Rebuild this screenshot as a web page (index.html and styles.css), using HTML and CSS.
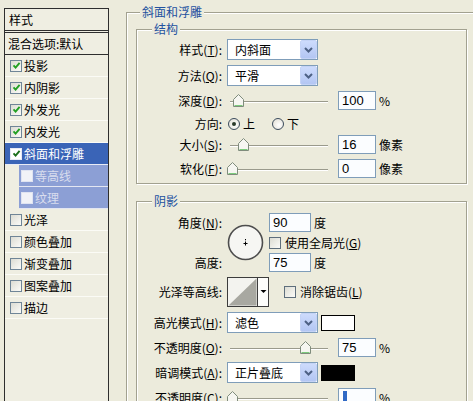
FILE: index.html
```html
<!DOCTYPE html>
<html lang="zh-CN">
<head>
<meta charset="utf-8">
<title>图层样式</title>
<link rel="stylesheet" href="styles.css">
</head>
<body>
<div class="dialog">
  <aside class="panel">
    <div class="panel-head">样式</div>
    <ul class="style-list">
      <li class="item blend">混合选项:默认</li>
      <li class="item"><span class="cb on"><svg class="tick" width="9" height="9" viewBox="0 0 9 9"><path d="M1.5 4.3 L3.6 6.6 L7.6 1.8"/></svg></span>投影</li>
      <li class="item"><span class="cb on"><svg class="tick" width="9" height="9" viewBox="0 0 9 9"><path d="M1.5 4.3 L3.6 6.6 L7.6 1.8"/></svg></span>内阴影</li>
      <li class="item"><span class="cb on"><svg class="tick" width="9" height="9" viewBox="0 0 9 9"><path d="M1.5 4.3 L3.6 6.6 L7.6 1.8"/></svg></span>外发光</li>
      <li class="item"><span class="cb on"><svg class="tick" width="9" height="9" viewBox="0 0 9 9"><path d="M1.5 4.3 L3.6 6.6 L7.6 1.8"/></svg></span>内发光</li>
      <li class="item selected"><span class="cb on"><svg class="tick" width="9" height="9" viewBox="0 0 9 9"><path d="M1.5 4.3 L3.6 6.6 L7.6 1.8"/></svg></span>斜面和浮雕</li>
      <li class="item sub"><span class="cb"></span>等高线</li>
      <li class="item sub"><span class="cb"></span>纹理</li>
      <li class="item"><span class="cb"></span>光泽</li>
      <li class="item"><span class="cb"></span>颜色叠加</li>
      <li class="item"><span class="cb"></span>渐变叠加</li>
      <li class="item"><span class="cb"></span>图案叠加</li>
      <li class="item"><span class="cb"></span>描边</li>
    </ul>
  </aside>

  <main class="content">
    <fieldset class="group outer">
      <legend class="group-title">斜面和浮雕</legend>

      <fieldset class="group inner structure">
        <legend class="group-title">结构</legend>
        <div class="rows">
          <div class="row r-select">
            <span class="lbl">样式(<u>T</u>):</span>
            <div class="select"><span class="select-text">内斜面</span><span class="select-btn"><svg width="9" height="6" viewBox="0 0 9 6"><path d="M1 1 L4.5 4.5 L8 1"/></svg></span></div>
          </div>
          <div class="row r-select">
            <span class="lbl">方法(<u>Q</u>):</span>
            <div class="select"><span class="select-text">平滑</span><span class="select-btn"><svg width="9" height="6" viewBox="0 0 9 6"><path d="M1 1 L4.5 4.5 L8 1"/></svg></span></div>
          </div>
          <div class="row r-field">
            <span class="lbl">深度(<u>D</u>):</span>
            <div class="slider"><span class="track"></span><span class="thumb" style="left:6px"><svg width="11" height="13" viewBox="0 0 11 13"><path class="thumb-body" d="M0.5 5.5 L5.5 0.5 L10.5 5.5 V12.5 H0.5 Z"/><path class="thumb-foot" d="M1.5 11.5 H9.5"/></svg></span></div>
            <span class="num">100</span><span class="unit">%</span>
          </div>
          <div class="row r-radio">
            <span class="lbl">方向:</span>
            <span class="radio on"></span><span class="opt">上</span>
            <span class="radio second"></span><span class="opt">下</span>
          </div>
          <div class="row r-field">
            <span class="lbl">大小(<u>S</u>):</span>
            <div class="slider"><span class="track"></span><span class="thumb" style="left:11px"><svg width="11" height="13" viewBox="0 0 11 13"><path class="thumb-body" d="M0.5 5.5 L5.5 0.5 L10.5 5.5 V12.5 H0.5 Z"/><path class="thumb-foot" d="M1.5 11.5 H9.5"/></svg></span></div>
            <span class="num">16</span><span class="unit">像素</span>
          </div>
          <div class="row r-field">
            <span class="lbl">软化(<u>F</u>):</span>
            <div class="slider"><span class="track"></span><span class="thumb" style="left:0px"><svg width="11" height="13" viewBox="0 0 11 13"><path class="thumb-body" d="M0.5 5.5 L5.5 0.5 L10.5 5.5 V12.5 H0.5 Z"/><path class="thumb-foot" d="M1.5 11.5 H9.5"/></svg></span></div>
            <span class="num">0</span><span class="unit">像素</span>
          </div>
        </div>
      </fieldset>

      <fieldset class="group inner shading">
        <legend class="group-title">阴影</legend>
        <div class="rows">
          <div class="angle">
            <span class="lbl a-l1">角度(<u>N</u>):</span>
            <svg class="dial" width="37" height="37" viewBox="0 0 37 37">
              <circle cx="18.5" cy="18.5" r="17" fill="#f6f6f3" stroke="#4d4d4d" stroke-width="1.6"/>
              <path d="M16.5 19.5 H20.5 M18.5 17.5 V21.5 M18.5 15 V16.3" stroke="#000" stroke-width="1" fill="none"/>
            </svg>
            <div class="a-f1"><span class="num wide">90</span><span class="unit">度</span></div>
            <div class="a-f2"><span class="chk"></span><span class="chk-text">使用全局光(<u>G</u>)</span></div>
            <span class="lbl a-l3">高度:</span>
            <div class="a-f3"><span class="num wide">75</span><span class="unit">度</span></div>
          </div>

          <div class="row r-contour">
            <span class="lbl">光泽等高线:</span>
            <svg class="contour" width="42" height="30" viewBox="0 0 42 30">
              <rect x="0.5" y="0.5" width="30" height="29" fill="#f3f3ef" stroke="#3c3c3c"/>
              <polygon points="1.5,28.5 29.5,1.5 29.5,28.5" fill="#a8a8a1"/>
              <rect x="30.5" y="0.5" width="11" height="29" fill="#fdfdfb" stroke="#3c3c3c"/>
              <polygon points="33.5,13 39.5,13 36.5,16" fill="#000"/>
            </svg>
            <span class="chk aa"></span><span class="chk-text">消除锯齿(<u>L</u>)</span>
          </div>

          <div class="row r-select">
            <span class="lbl">高光模式(<u>H</u>):</span>
            <div class="select"><span class="select-text">滤色</span><span class="select-btn"><svg width="9" height="6" viewBox="0 0 9 6"><path d="M1 1 L4.5 4.5 L8 1"/></svg></span></div>
            <span class="swatch white"></span>
          </div>
          <div class="row r-field">
            <span class="lbl">不透明度(<u>O</u>):</span>
            <div class="slider"><span class="track"></span><span class="thumb" style="left:73px"><svg width="11" height="13" viewBox="0 0 11 13"><path class="thumb-body" d="M0.5 5.5 L5.5 0.5 L10.5 5.5 V12.5 H0.5 Z"/><path class="thumb-foot" d="M1.5 11.5 H9.5"/></svg></span></div>
            <span class="num">75</span><span class="unit">%</span>
          </div>
          <div class="row r-select">
            <span class="lbl">暗调模式(<u>A</u>):</span>
            <div class="select"><span class="select-text">正片叠底</span><span class="select-btn"><svg width="9" height="6" viewBox="0 0 9 6"><path d="M1 1 L4.5 4.5 L8 1"/></svg></span></div>
            <span class="swatch black"></span>
          </div>
          <div class="row r-field">
            <span class="lbl">不透明度(<u>C</u>):</span>
            <div class="slider"><span class="track"></span><span class="thumb" style="left:0px"><svg width="11" height="13" viewBox="0 0 11 13"><path class="thumb-body" d="M0.5 5.5 L5.5 0.5 L10.5 5.5 V12.5 H0.5 Z"/><path class="thumb-foot" d="M1.5 11.5 H9.5"/></svg></span></div>
            <span class="num"><span class="caret"></span></span><span class="unit">%</span>
          </div>
        </div>
      </fieldset>
    </fieldset>
  </main>
</div>
</body>
</html>
```

FILE: styles.css
```css
* { box-sizing: border-box; }
html, body { margin: 0; padding: 0; }
body {
  width: 473px;
  height: 401px;
  overflow: hidden;
  background: #ecebdc;
  color: #000;
  font: 12px/14px "Noto Sans CJK SC", "Liberation Sans", sans-serif;
}
u { text-decoration: underline; text-underline-offset: 1px; }

.dialog { display: flex; align-items: flex-start; }

/* ---------- left style list ---------- */
.panel {
  flex: none;
  width: 105px;
  height: 430px;
  margin: 8px 0 0 4px;
  border: 1px solid #2e2e2e;
  background: #efeee2;
}
.panel-head {
  height: 24px;
  padding: 3px 0 0 4px;
  border-bottom: 3px double #2e2e2e;
  line-height: 16px;
}
.style-list { list-style: none; margin: 0; padding: 0; }
.item {
  display: flex;
  align-items: center;
  height: 22px;
  padding-left: 5px;
  border-bottom: 1px solid #fbfbf6;
  white-space: nowrap;
}
.item.blend { padding-left: 3px; border-bottom-color: #2e2e2e; }
.item.selected { background: #3a64b7; color: #fff; border-bottom-color: #e8ebf6; }
.item.sub {
  margin-left: 14px;
  padding-left: 2px;
  background: #8c9fd5;
  color: #d9ddee;
  border-bottom-color: #e3e6f2;
}
.cb {
  flex: none;
  width: 12px;
  height: 12px;
  margin-right: 2px;
  border: 1px solid #6f8597;
  background: linear-gradient(135deg, #dcdcd3, #fbfbf8);
  display: flex;
  align-items: center;
  justify-content: center;
}
.selected .cb { background: #fff; border-color: #e6e9f4; }
.sub .cb { background: #f1f2f7; border-color: #dfe3f1; }
.tick path { fill: none; stroke: #22a022; stroke-width: 1.9; }
.selected .tick path { stroke: #1a6e1a; }

/* ---------- right groups ---------- */
.content { flex: none; margin-left: 17px; }
.group {
  margin: 0;
  padding: 0;
  min-width: 0;
  border: 1px solid #a2a190;
  box-shadow: inset 1px 1px 0 #fff, 1px 1px 0 #fff;
}
.group-title {
  padding: 0 2px;
  line-height: 14px;
  color: #23519f;
  background: #ecebdc;
}
.outer { width: 380px; height: 430px; margin-top: 5px; }
.outer > .group-title { margin-left: 13px; }
.inner { width: 331px; margin-left: 9px; }
.inner > .group-title { margin-left: 15px; }
.structure { margin-top: 3px; padding: 3px 0 5px; }
.shading { margin-top: 10px; padding: 5px 0 0; height: 260px; }

.rows { display: flex; flex-direction: column; gap: 5px; }
.row { display: flex; align-items: center; white-space: nowrap; }
.r-select { height: 21px; }
.r-field { height: 19px; }
.r-radio { height: 13px; margin-top: 2px; }
.r-contour { height: 30px; }

.lbl {
  flex: none;
  width: 85px;
  margin-right: 5px;
  text-align: right;
  white-space: nowrap;
}

.select {
  flex: none;
  display: flex;
  align-items: center;
  width: 91px;
  height: 21px;
  border: 1px solid #7f9db9;
  background: #fff;
}
.select-text { flex: 1; padding-left: 7px; }
.select-btn {
  flex: none;
  display: flex;
  align-items: center;
  justify-content: center;
  width: 17px;
  height: 19px;
  border: 1px solid #c4d3f6;
  border-radius: 2px;
  background: linear-gradient(#cddbfc, #b3c6f3);
}
.select-btn path { fill: none; stroke: #4d6185; stroke-width: 2; }

.slider { flex: none; position: relative; width: 101px; height: 13px; }
.track {
  position: absolute;
  left: 3px;
  right: 0;
  top: 7px;
  height: 2px;
  border-top: 1px solid #9a9a8c;
  border-bottom: 1px solid #fff;
}
.thumb { position: absolute; top: 0; width: 11px; height: 13px; }
.thumb svg { display: block; }
.thumb-body { fill: #f6f6f1; stroke: #7f8c7c; }
.thumb-foot { stroke: #7ccb7c; fill: none; }

.num {
  flex: none;
  display: block;
  width: 38px;
  height: 19px;
  margin-left: 10px;
  padding-left: 3px;
  border: 1px solid #7f9db9;
  background: #fbfdff;
  font: 13px/17px "Liberation Sans", sans-serif;
}
.num.wide { width: 42px; margin-left: 0; }
.unit { margin-left: 3px; }
.caret {
  display: inline-block;
  width: 5px;
  height: 13px;
  margin-top: 2px;
  vertical-align: top;
  background: #316ac5;
  border-left: 1px solid #fff;
}

.radio {
  flex: none;
  position: relative;
  width: 12px;
  height: 12px;
  margin-left: 1px;
  border: 1px solid #3b4b5c;
  border-radius: 50%;
  background: radial-gradient(circle at 60% 60%, #fff, #dedbd0);
}
.radio.on::after {
  content: "";
  position: absolute;
  left: 3px;
  top: 3px;
  width: 4px;
  height: 4px;
  border-radius: 50%;
  background: #2a3a2a;
}
.radio.second { margin-left: 17px; }
.opt { margin-left: 3px; }

/* angle block */
.angle {
  display: grid;
  grid-template-columns: 85px 37px auto;
  grid-template-rows: 19px 13px 19px;
  grid-template-areas:
    "l1 dial f1"
    ".  dial f2"
    "l3 dial f3";
  column-gap: 5px;
  row-gap: 4px;
  align-items: center;
}
.a-l1 { grid-area: l1; margin: 0; }
.a-l3 { grid-area: l3; margin: 0; }
.dial { grid-area: dial; display: block; }
.a-f1, .a-f2, .a-f3 { display: flex; align-items: center; white-space: nowrap; }
.a-f1 { grid-area: f1; }
.a-f2 { grid-area: f2; }
.a-f3 { grid-area: f3; }

.chk {
  flex: none;
  width: 12px;
  height: 12px;
  border: 1px solid #5e6e7c;
  background: linear-gradient(135deg, #dcdcd3, #fbfbf8);
}
.chk-text { margin-left: 4px; }
.contour { flex: none; display: block; }
.chk.aa { margin-left: 15px; }

.swatch { flex: none; width: 34px; height: 16px; margin-left: 3px; border: 1px solid #000; }
.swatch.white { background: #fff; }
.swatch.black { background: #000; }
```
